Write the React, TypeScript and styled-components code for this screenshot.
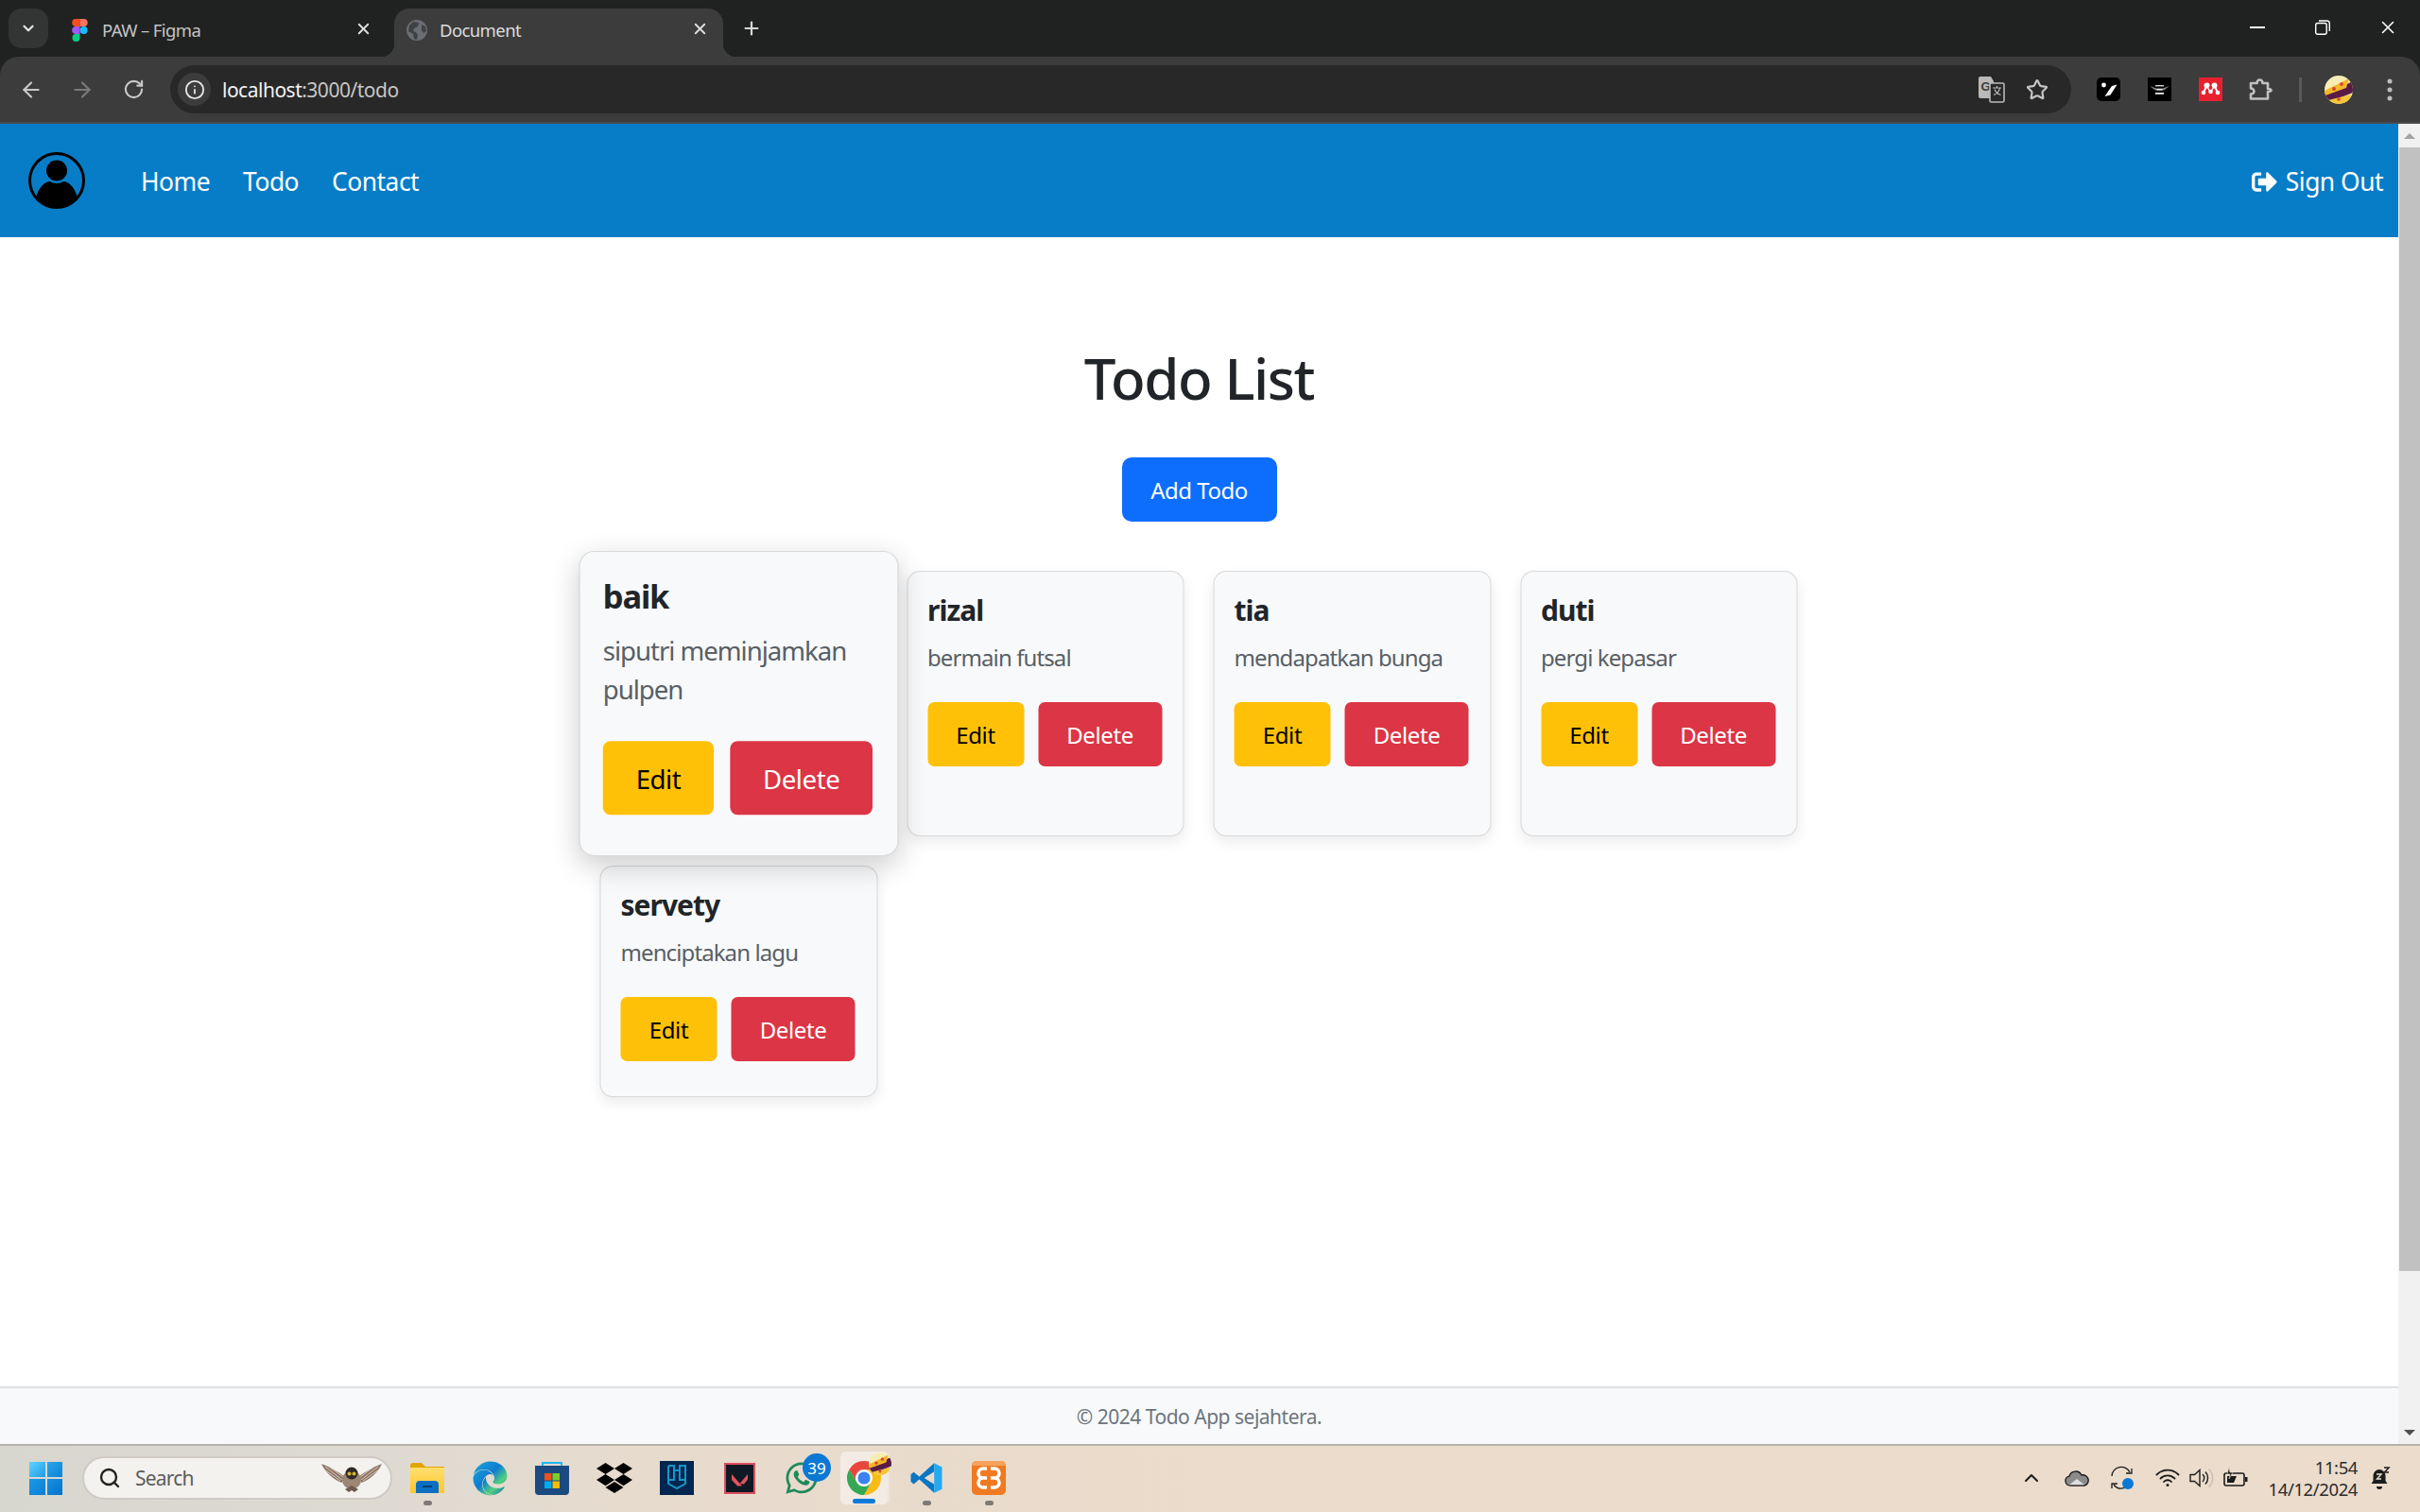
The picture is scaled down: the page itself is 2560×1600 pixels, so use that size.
import React from 'react';
import styled, { createGlobalStyle } from 'styled-components';
import { ArrowLeft, ArrowRight, RotateCw, Info, X, Plus, ChevronDown, ChevronUp, Star, Search as SearchIcon } from 'lucide-react';
import { FaWhatsapp, FaDropbox, FaSignOutAlt, FaEdge } from 'react-icons/fa';

const Global = createGlobalStyle`
  html, body { margin: 0; padding: 0; height: 100%; overflow: hidden; background: #fff; }
  * { box-sizing: border-box; }
  body { font-family: "Noto Sans", "Open Sans", sans-serif; }
`;

const Screen = styled.div`
  width: 2560px; height: 1600px; display: flex; flex-direction: column; overflow: hidden; background: #202222;
`;
const TabStrip = styled.div`
  height: 60px; flex: none; background: #202222; display: flex; align-items: flex-start; padding: 9px 0 0 9px; color: #c7c7c7;
`;
const TabListButton = styled.div`
  width: 42px; height: 42px; border-radius: 14px; background: #333535; color: #e3e3e3; display: flex; align-items: center; justify-content: center;
`;
const Tab = styled.div<{ $active?: boolean }>`
  position: relative; height: 51px; display: flex; align-items: flex-start; font-size: 18.5px; letter-spacing: -0.6px; line-height: 46px;
  width: ${p => (p.$active ? 348 : 357)}px;
  padding-left: 12px;
  margin-left: ${p => (p.$active ? 0 : 9)}px;
  color: ${p => (p.$active ? '#dcdcdc' : '#c4c4c4')};
  background: ${p => (p.$active ? '#3c3c3c' : 'transparent')};
  border-radius: 16px 16px 0 0;
  ${p => p.$active && `
    &::before, &::after { content: ''; position: absolute; bottom: 0; width: 14px; height: 14px; }
    &::before { left: -14px; background: radial-gradient(circle at 0 0, transparent 14px, #3c3c3c 14.5px); }
    &::after { right: -14px; background: radial-gradient(circle at 100% 0, transparent 14px, #3c3c3c 14.5px); }
  `}
`;
const TabFavicon = styled.span`
  width: 24px; height: 46px; display: flex; align-items: center; justify-content: center; flex: none; margin-right: 12px;
`;
const TabTitle = styled.span`flex: 1; white-space: nowrap;`;
const TabClose = styled.span<{ $end: number }>`
  width: 30px; height: 42px; display: flex; align-items: center; justify-content: center; margin-right: ${p => p.$end}px; color: #dedede;
`;
const NewTab = styled.div`
  width: 30px; height: 42px; margin-left: 15px; display: flex; align-items: center; justify-content: center; color: #d8d8d8;
`;
const WindowControls = styled.div`margin-left: auto; display: flex; margin-top: -9px;`;
const WindowButton = styled.div`
  width: 69px; height: 58px; display: flex; align-items: center; justify-content: center; color: #fff;
`;

const Toolbar = styled.div`
  height: 71px; flex: none; background: #3c3c3c; border-bottom: 2px solid #4a4a4a; border-radius: 20px 20px 0 0; display: flex; align-items: center; padding-left: 6px;
`;
const ToolButton = styled.div<{ $dim?: boolean }>`
  width: 54px; height: 48px; flex: none; display: flex; align-items: center; justify-content: center; color: ${p => (p.$dim ? '#7a7a7a' : '#c8c8c8')};
`;
const Omnibox = styled.div`
  flex: 1; height: 51px; margin-left: 12px; background: #282828; border-radius: 26px; display: flex; align-items: center; padding: 0 12px 0 8px;
`;
const InfoChip = styled.div`
  width: 35px; height: 35px; border-radius: 50%; background: #3c3c3c; color: #e6e6e6; display: flex; align-items: center; justify-content: center;
`;
const Url = styled.div`margin-left: 12px; font-size: 21px; letter-spacing: -0.5px; color: #c6c6c6; flex: 1; white-space: nowrap;`;
const UrlHost = styled.span`color: #f2f2f2;`;
const OmniButton = styled.div`
  width: 48px; height: 40px; display: flex; align-items: center; justify-content: center; color: #c4c4c4;
`;
const ToolbarRight = styled.div`display: flex; align-items: center; margin-left: 12px; flex: none; padding-right: 5.5px;`;
const ToolbarDivider = styled.div`width: 3px; height: 26px; background: #5a5a5a; margin: 0 12px 0 12.5px;`;

const Content = styled.div`flex: 1; min-height: 0; display: flex;`;
const PageColumn = styled.div`flex: 1; min-width: 0; display: flex; flex-direction: column;`;
const NavBar = styled.nav`
  height: 120px; flex: none; background: #087dc7; display: flex; align-items: center; padding: 0 16px 0 30px; color: #fff;
`;
const NavLinks = styled.div`display: flex; gap: 35px; margin-left: 59px; padding-top: 2px; font-size: 26.4px; letter-spacing: -0.5px;`;
const NavLink = styled.span``;
const SignOut = styled.div`margin-left: auto; display: flex; align-items: center; gap: 9px; padding-top: 2px; font-size: 26.4px; letter-spacing: -0.5px;`;

const Main = styled.main`flex: 1; min-height: 0; background: #fff; display: flex; flex-direction: column; align-items: center; padding-top: 110.5px;`;
const Heading = styled.h1`
  margin: 0; font-size: 60px; line-height: 77px; font-weight: 500; letter-spacing: -1.4px; color: #212529;
`;
const AddButton = styled.button`
  margin-top: 45.5px; width: 164px; height: 68px; border: 0; border-radius: 10px; background: #0d6efd; color: #fff; font: inherit; font-size: 24px; letter-spacing: -0.5px;
`;
const CardGrid = styled.div`
  margin-top: 52px; display: grid; grid-template-columns: repeat(4, 293.5px); column-gap: 31px; row-gap: 31px; transform: translateX(-0.5px);
`;
const Card = styled.article<{ $featured?: boolean }>`
  display: flex; flex-direction: column; background: #f8f9fa; border: 1.6px solid rgba(0,0,0,.125); border-radius: 14px; padding: 21.5px 21px 37px;
  position: relative;
  box-shadow: ${p => (p.$featured ? '0 8px 26px rgba(0,0,0,.2)' : '0 6px 14px rgba(0,0,0,.08)')};
  ${p => p.$featured && 'transform: scale(1.15); z-index: 2;'}
`;
const CardTitle = styled.h5`margin: 0 0 13.5px; font-size: 30px; line-height: 38px; font-weight: 700; letter-spacing: -1px; color: #212529;`;
const CardText = styled.p`margin: 0 0 29px; font-size: 24px; line-height: 36px; letter-spacing: -0.9px; color: #595f66;`;
const CardActions = styled.div`display: flex; gap: 15px;`;
const ActionButton = styled.button<{ $kind: 'edit' | 'delete' }>`
  height: 68px; border: 0; border-radius: 7px; font: inherit; font-size: 24px; letter-spacing: -0.4px; padding: 0;
  width: ${p => (p.$kind === 'edit' ? 102 : 131)}px;
  background: ${p => (p.$kind === 'edit' ? '#ffc107' : '#dc3545')};
  color: ${p => (p.$kind === 'edit' ? '#000' : '#fff')};
`;
const Footer = styled.footer`
  height: 61px; flex: none; background: #f8f9fa; border-top: 2px solid #dee2e6; display: flex; align-items: center; justify-content: center; color: #6c757d; font-size: 21px; letter-spacing: -0.5px;
`;
const Scrollbar = styled.div`width: 23px; flex: none; background: #f1f1f1; display: flex; flex-direction: column; padding-left: 1px;`;
const ScrollArrow = styled.div<{ $down?: boolean }>`
  height: 25px; flex: none; display: flex; align-items: center; justify-content: center;
  &::before { content: ''; width: 0; height: 0; border-left: 6px solid transparent; border-right: 6px solid transparent;
    ${p => (p.$down ? 'border-top: 6px solid #505050;' : 'border-bottom: 6px solid #a3a3a3;')} }
`;
const ScrollThumb = styled.div`height: 1189px; background: #c1c1c1; flex: none;`;
const ScrollTrack = styled.div`flex: 1;`;

const Taskbar = styled.div`
  height: 72px; flex: none; border-top: 2px solid #b6b1a9; display: flex; align-items: center; padding: 0 16px 2px 31px;
  background: linear-gradient(90deg, #d7d6cf 0%, #dddad2 14%, #e7dbce 26%, #eadbcb 45%, #ebdccc 100%);
`;
const StartLogo = styled.div`
  width: 35px; height: 35px; display: grid; grid-template-columns: 1fr 1fr; gap: 2px; flex: none;
`;
const StartPane = styled.span<{ $from: string; $to: string }>`
  background: linear-gradient(135deg, ${p => p.$from}, ${p => p.$to});
`;
const SearchBox = styled.div`
  width: 328px; height: 46px; margin-left: 21px; margin-right: 4px; flex: none; border-radius: 23px; background: #f3f2ef; border: 2px solid #cfcbc4; display: flex; align-items: center; padding: 0 8px 0 15px; color: #5c5c5c; font-size: 21px; letter-spacing: -0.8px;
`;
const SearchLabel = styled.span`margin-left: 15px; flex: 1;`;
const TaskSlot = styled.div<{ $active?: boolean }>`
  position: relative; width: 66px; height: 56px; flex: none; display: flex; align-items: center; justify-content: center;
  ${p => p.$active && `&::before { content: ''; position: absolute; left: 8px; right: 8px; top: 0; bottom: 0; background: #f4ece4; border-radius: 6px; box-shadow: 2px 0 0 #efe5da; }`}
  & > * { position: relative; }
`;
const RunningDot = styled.span`
  position: absolute !important; bottom: -1px; left: 50%; margin-left: -4px; width: 9px; height: 5px; border-radius: 3px; background: #7d7a76;
`;
const ActiveBar = styled.span`
  position: absolute !important; bottom: 1px; left: 21px; width: 24px; height: 5px; border-radius: 3px; background: #0a7bd8;
`;
const CountBadge = styled.span`
  position: absolute !important; top: 2px; right: 2px; width: 30px; height: 30px; border-radius: 50%; background: #0b78d4; color: #fff; font-size: 17px; display: flex; align-items: center; justify-content: center;
`;
const ChromeOverlay = styled.span`position: absolute !important; top: 1px; right: 4px; display: flex;`;
const Tray = styled.div`margin-left: auto; display: flex; align-items: center; color: #1c1c1c;`;
const TraySlot = styled.div<{ $w: number }>`
  width: ${p => p.$w}px; height: 40px; display: flex; align-items: center; justify-content: center; flex: none;
`;
const TrayGap = styled.div`width: 6px;`;
const Clock = styled.div`
  width: 111px; text-align: right; font-size: 18.5px; line-height: 23px; letter-spacing: -0.4px; color: #2b2b2b;
`;

const FigmaIcon = () => (
  <svg width="17" height="24" viewBox="0 0 17 24">
    <path d="M4.2 0H8.5V8H4.2a4 4 0 0 1 0-8z" fill="#f24e1e" />
    <path d="M8.5 0h4.2a4 4 0 0 1 0 8H8.5z" fill="#ff7262" />
    <path d="M4.2 8H8.5V16H4.2a4 4 0 0 1 0-8z" fill="#a259ff" />
    <circle cx="12.6" cy="12" r="4" fill="#1abcfe" />
    <path d="M4.2 16H8.5v4a4 4 0 1 1-4.3-4z" fill="#0acf83" />
  </svg>
);
const GlobeIcon = () => (
  <svg width="22" height="22" viewBox="0 0 22 22">
    <circle cx="11" cy="11" r="11" fill="#6a6d72" />
    <path d="M7 2l6 1-1 4-4 2-1 3 3 1 2 3-1 5-3-1-1-5-5-3 1-6z" fill="#3f4145" />
    <path d="M16 5l4 2 1 5-3 2-2-3z" fill="#3f4145" />
  </svg>
);
const TranslateIcon = () => (
  <svg width="28" height="28" viewBox="0 0 28 28">
    <path d="M2 0h11l3 5v13l-3 5H2a2 2 0 0 1-2-2V2a2 2 0 0 1 2-2z" fill="#b9b9b9" />
    <text x="2.5" y="14.5" fontSize="13" fontWeight="700" fill="#3c3c3c" fontFamily="Liberation Sans, sans-serif">G</text>
    <rect x="12" y="7" width="15" height="20" rx="1.5" fill="#282828" stroke="#b9b9b9" strokeWidth="1.6" />
    <path d="M15 12h9M19.5 10v2M22.5 12c-.6 3.5-3 6-6.5 7.5M17 13.5c1 2.500 3.500 5 6.500 6" stroke="#b9b9b9" strokeWidth="1.2" fill="none" />
  </svg>
);
const ExtSlash = () => (
  <svg width="25" height="25" viewBox="0 0 25 25">
    <rect width="25" height="25" rx="5" fill="#000" />
    <circle cx="7.500" cy="8" r="2.400" fill="#fff" />
    <path d="M16 9l5.500-1.500-7 11L8.500 20z" fill="#fff" />
  </svg>
);
const ExtWing = () => (
  <svg width="25" height="25" viewBox="0 0 25 25">
    <rect width="25" height="25" fill="#000" />
    <path d="M2 9l7 2.500h7L23 9l-6 4.500H8z" fill="#8a8a8a" />
    <rect x="8" y="8" width="9" height="1.400" fill="#d8d8d8" />
    <rect x="9.500" y="12" width="6" height="1.500" fill="#e8e8e8" />
    <rect x="8" y="16" width="9" height="1.800" fill="#e8e8e8" />
  </svg>
);
const ExtMendeley = () => (
  <svg width="25" height="25" viewBox="0 0 25 25">
    <rect width="25" height="25" fill="#e8202e" />
    <g fill="#fff">
      <circle cx="5" cy="16" r="2.300" /><circle cx="20" cy="16" r="2.300" /><circle cx="12.500" cy="15" r="2.300" />
      <circle cx="8.500" cy="8.500" r="3" /><circle cx="16.500" cy="8.500" r="3" />
    </g>
    <path d="M5 16l3.500-7.500 4 6.500 4-6.500L20 16" stroke="#fff" strokeWidth="2" fill="none" />
    <circle cx="12.500" cy="11" r="2" fill="#e8202e" />
  </svg>
);
const PuzzleIcon = () => (
  <svg width="26" height="26" viewBox="0 0 26 26" fill="none" stroke="#c0c0c0" strokeWidth="2.600" strokeLinejoin="round">
    <path d="M2 6h6.500c0-2 1-3.500 3-3.500s3 1.500 3 3.500H20v6c2 0 3.500.4 3.500 1.500S22 15 20 15v7.500H2v-5c2 0 3.400-1 3.400-2.800S4 11.500 2 11.500z" />
  </svg>
);
const PizzaAvatar = ({ size }: { size: number }) => (
  <svg width={size} height={size} viewBox="0 0 30 30">
    <defs><clipPath id={`pz${size}`}><circle cx="15" cy="15" r="15" /></clipPath></defs>
    <g clipPath={`url(#pz${size})`}>
      <rect width="30" height="30" fill="#f6eeb4" />
      <path d="M0 20L30 6v12L0 30z" fill="#5a1b46" />
      <path d="M0 16L26 3l-3 10L1 21z" fill="#f3b829" />
      <path d="M4 26l24-6-2 10H6z" fill="#f5c53a" />
      <circle cx="10" cy="14" r="2" fill="#d8492a" /><circle cx="18" cy="9" r="2" fill="#d8492a" /><circle cx="15" cy="25" r="1.800" fill="#d8492a" />
    </g>
  </svg>
);
const ProfileAvatar = () => (
  <svg width="60" height="60" viewBox="0 0 60 60">
    <defs><clipPath id="avatarClip"><circle cx="30" cy="30" r="29" /></clipPath></defs>
    <circle cx="30" cy="30" r="28.500" fill="none" stroke="#000" strokeWidth="3" />
    <circle cx="30" cy="19.500" r="11" fill="#000" />
    <g clipPath="url(#avatarClip)"><path d="M8 50C9 39 17 31 23 31c2 1 4 2 7 2s5-1 7-2c6 0 14 8 15 19v10H8z" fill="#000" /></g>
  </svg>
);
const WingsOwl = () => (
  <svg width="66" height="34" viewBox="0 0 66 34">
    <path d="M1 2c8 3 17 8 24 13l-2 7C14 19 5 11 1 2z" fill="#8d7666" />
    <path d="M65 2c-8 3-17 8-24 13l2 7c9-3 18-11 22-20z" fill="#8d7666" />
    <path d="M5 5l18 14M9 5l15 11M4 8l17 12M61 5L43 19M57 5L42 16M62 8L45 20" stroke="#d9cbbd" strokeWidth="1" />
    <ellipse cx="33" cy="19" rx="10" ry="10" fill="#9c8675" />
    <circle cx="33" cy="12" r="6.500" fill="#2f2a27" />
    <circle cx="30.500" cy="12.500" r="2" fill="#d8b62c" /><circle cx="35.500" cy="12.500" r="2" fill="#d8b62c" />
    <path d="M26 29l7-4 7 4-4 3-3-2-3 2z" fill="#6f5b4e" />
  </svg>
);
const FolderIcon = () => (
  <svg width="36" height="32" viewBox="0 0 36 32">
    <path d="M0 3a3 3 0 0 1 3-3h9l4 4h20v6H0z" fill="#e3a500" />
    <path d="M0 5h36v27H0z" fill="url(#folderFill)" />
    <path d="M6 32v-9a4 4 0 0 1 4-4h16a4 4 0 0 1 4 4v9z" fill="#0b6fc2" />
    <rect x="13" y="24" width="10" height="2" fill="#063f76" />
    <defs><linearGradient id="folderFill" x1="0" y1="0" x2="0" y2="1"><stop offset="0" stopColor="#ffdf6e" /><stop offset="1" stopColor="#ffc52e" /></linearGradient></defs>
  </svg>
);
const GradientDefs = () => (
  <svg width="0" height="0" style={{ position: 'absolute' }}>
    <defs>
      <linearGradient id="edgeFill" x1="0" y1="0" x2="1" y2="1">
        <stop offset="0" stopColor="#1aa9d8" /><stop offset=".45" stopColor="#0f7bd0" /><stop offset=".7" stopColor="#52d27e" /><stop offset="1" stopColor="#0b5db3" />
      </linearGradient>
    </defs>
  </svg>
);
const StoreIcon = () => (
  <svg width="36" height="36" viewBox="0 0 36 36">
    <path d="M8 6V2h20v4" fill="none" stroke="#22b7ef" strokeWidth="2" />
    <path d="M0 5h36v27a4 4 0 0 1-4 4H4a4 4 0 0 1-4-4z" fill="#1b4a80" />
    <rect x="10" y="13" width="7.500" height="7.500" fill="#f1511b" /><rect x="18.500" y="13" width="7.500" height="7.500" fill="#80cc28" />
    <rect x="10" y="21.500" width="7.500" height="7.500" fill="#00adef" /><rect x="18.500" y="21.500" width="7.500" height="7.500" fill="#fbbc09" />
  </svg>
);
const ShieldApp = () => (
  <svg width="36" height="36" viewBox="0 0 36 36">
    <rect width="36" height="36" fill="#02264f" />
    <path d="M9 5v19l9 5 9-5V5M9 5h6v15H9M21 20V5h6v15h-6z" fill="none" stroke="#1597c8" strokeWidth="2" />
    <path d="M15 10h6" stroke="#1597c8" strokeWidth="2" />
  </svg>
);
const ValorantApp = () => (
  <svg width="33" height="33" viewBox="0 0 33 33">
    <rect x="1" y="1" width="31" height="31" fill="#0f1923" stroke="#d9505e" strokeWidth="2" />
    <path d="M8 12l11 12.500h-5L8 18zM25 12v5.500l-4 5-4.500-.5z" fill="#e0535f" />
  </svg>
);
const ChromeIcon = () => (
  <svg width="36" height="36" viewBox="2 2 44 44">
    <path d="M24 2A22 22 0 0 0 4.950 13l9.520 16.500A11 11 0 0 1 24 13h19.050A22 22 0 0 0 24 2z" fill="#e8453c" />
    <path d="M43.050 13H24a11 11 0 0 1 9.530 16.500L24 46a22 22 0 0 0 19.050-33z" fill="#f9bc15" />
    <path d="M4.950 13A22 22 0 0 0 24 46l9.530-16.500a11 11 0 0 1-19.060 0z" fill="#34a853" />
    <circle cx="24" cy="24" r="10.500" fill="#fff" /><circle cx="24" cy="24" r="8" fill="#3b82f0" />
  </svg>
);
const VsCodeIcon = () => (
  <svg width="36" height="36" viewBox="0 0 48 48">
    <path d="M35 3L14 22 6 15.500 2 19v10l4 3.500L14 26l21 19V33L21 24l14-9z" fill="#0b76c2" />
    <path d="M35 3l11 5.500v31L35 45z" fill="#25a9f0" />
  </svg>
);
const XamppIcon = () => (
  <svg width="36" height="36" viewBox="0 0 36 36">
    <rect width="36" height="36" rx="5" fill="#ef7a22" />
    <path d="M0 5a5 5 0 0 1 5-5h26a5 5 0 0 1 5 5z" fill="#f7a25c" />
    <g fill="none" stroke="#fff" strokeWidth="3.600">
      <path d="M16 8h-4a4.500 4.500 0 0 0 0 10h4M16 18h-4a5 5 0 0 0 0 10h4" />
      <path d="M20 8h4a4.500 4.500 0 0 1 0 10h-4M20 18h4a5 5 0 0 1 0 10h-4" />
    </g>
  </svg>
);
const CloudIcon = () => (
  <svg width="26" height="18" viewBox="0 0 26 18">
    <path d="M6 17a5 5 0 0 1-1-9.900A7 7 0 0 1 18 6a5.500 5.500 0 0 1 3 11z" fill="#8b8b8b" stroke="#1c1c1c" strokeWidth="1.400" />
    <path d="M5 16.300L13 10l8 6.300z" fill="#dedede" />
  </svg>
);
const SyncIcon = () => (
  <svg width="26" height="26" viewBox="0 0 26 26" fill="none" stroke="#1c1c1c" strokeWidth="1.300">
    <path d="M2 11A10 10 0 0 1 21 7" /><path d="M23 3v5h-6" />
    <path d="M22 15A10 10 0 0 1 4 20" /><path d="M2 24v-5h6" />
    <circle cx="19" cy="19" r="6" fill="#0b78d4" stroke="none" />
  </svg>
);
const WifiIcon = () => (
  <svg width="26" height="20" viewBox="0 0 26 20" fill="none" stroke="#1c1c1c" strokeWidth="1.800" strokeLinecap="round">
    <path d="M1.500 6.500a16 16 0 0 1 23 0" /><path d="M5.500 10.500a10.500 10.500 0 0 1 15 0" /><path d="M9 14a5.500 5.500 0 0 1 8 0" />
    <circle cx="13" cy="17.500" r="1.500" fill="#1c1c1c" stroke="none" />
  </svg>
);
const SpeakerIcon = () => (
  <svg width="26" height="22" viewBox="0 0 26 22" fill="none" stroke="#1c1c1c" strokeWidth="1.400">
    <path d="M1 7.500h4.500L11 2.500v17l-5.500-5H1z" /><path d="M14 7a5.500 5.500 0 0 1 0 8" /><path d="M17 4.500a9.500 9.500 0 0 1 0 13" />
    <path d="M20.500 1.500a13 13 0 0 1 0 19" stroke="#c9bdb0" />
  </svg>
);
const BatteryIcon = () => (
  <svg width="26" height="22" viewBox="0 0 26 22">
    <rect x="1" y="6" width="21" height="13" rx="2" fill="none" stroke="#1c1c1c" strokeWidth="1.600" />
    <rect x="23" y="10" width="2.500" height="5" fill="#1c1c1c" />
    <path d="M4 16V9h10l-3 7z" fill="#1c1c1c" />
    <path d="M6 0l-2 7h3l-1 5 4-7H7z" fill="#1c1c1c" stroke="#eadbcb" strokeWidth=".6" />
  </svg>
);
const BellZzIcon = () => (
  <svg width="24" height="24" viewBox="0 0 24 24">
    <path d="M10 3a6.500 6.500 0 0 1 6.500 6.500V15l2 3H1.500l2-3V9.500A6.500 6.500 0 0 1 10 3z" fill="#1c1c1c" />
    <path d="M7 21h6a3 3 0 0 1-6 0z" fill="#1c1c1c" />
    <path d="M7 8h5l-4.500 5H12" stroke="#eadbcb" strokeWidth="1.400" fill="none" />
    <path d="M15 1h5l-4.500 5H20" stroke="#1c1c1c" strokeWidth="1.500" fill="#eadbcb" />
  </svg>
);
const RestoreIcon = () => (
  <svg width="16" height="16" viewBox="0 0 16 16" fill="none" stroke="#fff" strokeWidth="1.400">
    <rect x=".7" y="3.500" width="11.500" height="11.800" rx="2" /><path d="M4 1h8.500A2.800 2.800 0 0 1 15.300 3.800V12" />
  </svg>
);
const MenuDots = () => (
  <svg width="6" height="24" viewBox="0 0 6 24" fill="#bdbdbd"><circle cx="3" cy="3" r="2.500" /><circle cx="3" cy="12" r="2.500" /><circle cx="3" cy="21" r="2.500" /></svg>
);
const MinimizeGlyph = () => <svg width="16" height="2" viewBox="0 0 16 2"><rect width="16" height="2" fill="#fff" /></svg>;

type Todo = { title: string; text: string; featured?: boolean };
const todos: Todo[] = [
  { title: 'baik', text: 'siputri meminjamkan pulpen', featured: true },
  { title: 'rizal', text: 'bermain futsal' },
  { title: 'tia', text: 'mendapatkan bunga' },
  { title: 'duti', text: 'pergi kepasar' },
  { title: 'servety', text: 'menciptakan lagu' },
];

export default function App() {
  return (
    <Screen>
      <Global />
      <GradientDefs />
      <TabStrip>
        <TabListButton><ChevronDown size={18} strokeWidth={3} /></TabListButton>
        <Tab>
          <TabFavicon><FigmaIcon /></TabFavicon>
          <TabTitle>PAW – Figma</TabTitle>
          <TabClose $end={18}><X size={19} strokeWidth={2.400} /></TabClose>
        </Tab>
        <Tab $active>
          <TabFavicon><GlobeIcon /></TabFavicon>
          <TabTitle>Document</TabTitle>
          <TabClose $end={10}><X size={19} strokeWidth={2.400} /></TabClose>
        </Tab>
        <NewTab><Plus size={22} strokeWidth={2.400} /></NewTab>
        <WindowControls>
          <WindowButton><MinimizeGlyph /></WindowButton>
          <WindowButton><RestoreIcon /></WindowButton>
          <WindowButton><X size={22} strokeWidth={1.700} /></WindowButton>
        </WindowControls>
      </TabStrip>
      <Toolbar>
        <ToolButton><ArrowLeft size={26} strokeWidth={2} /></ToolButton>
        <ToolButton $dim><ArrowRight size={26} strokeWidth={2} /></ToolButton>
        <ToolButton><RotateCw size={23} strokeWidth={2.200} /></ToolButton>
        <Omnibox>
          <InfoChip><Info size={22} strokeWidth={2} /></InfoChip>
          <Url><UrlHost>localhost</UrlHost>:3000/todo</Url>
          <OmniButton><TranslateIcon /></OmniButton>
          <OmniButton><Star size={24} strokeWidth={2.200} /></OmniButton>
        </Omnibox>
        <ToolbarRight>
          <ToolButton><ExtSlash /></ToolButton>
          <ToolButton><ExtWing /></ToolButton>
          <ToolButton><ExtMendeley /></ToolButton>
          <ToolButton><PuzzleIcon /></ToolButton>
          <ToolbarDivider />
          <ToolButton><PizzaAvatar size={30} /></ToolButton>
          <ToolButton><MenuDots /></ToolButton>
        </ToolbarRight>
      </Toolbar>
      <Content>
        <PageColumn>
          <NavBar>
            <ProfileAvatar />
            <NavLinks>
              <NavLink>Home</NavLink>
              <NavLink>Todo</NavLink>
              <NavLink>Contact</NavLink>
            </NavLinks>
            <SignOut><FaSignOutAlt size={27} />Sign Out</SignOut>
          </NavBar>
          <Main>
            <Heading>Todo List</Heading>
            <AddButton>Add Todo</AddButton>
            <CardGrid>
              {todos.map(t => (
                <Card key={t.title} $featured={t.featured}>
                  <CardTitle>{t.title}</CardTitle>
                  <CardText>{t.text}</CardText>
                  <CardActions>
                    <ActionButton $kind="edit">Edit</ActionButton>
                    <ActionButton $kind="delete">Delete</ActionButton>
                  </CardActions>
                </Card>
              ))}
            </CardGrid>
          </Main>
          <Footer>© 2024 Todo App sejahtera.</Footer>
        </PageColumn>
        <Scrollbar>
          <ScrollArrow />
          <ScrollThumb />
          <ScrollTrack />
          <ScrollArrow $down />
        </Scrollbar>
      </Content>
      <Taskbar>
        <StartLogo>
          <StartPane $from="#5fd3ff" $to="#1f9be6" />
          <StartPane $from="#2ba5ea" $to="#0a84d8" />
          <StartPane $from="#1c97e4" $to="#0a7fd6" />
          <StartPane $from="#1590e0" $to="#0673cc" />
        </StartLogo>
        <SearchBox>
          <SearchIcon size={24} strokeWidth={2.400} color="#222" />
          <SearchLabel>Search</SearchLabel>
          <WingsOwl />
        </SearchBox>
        <TaskSlot><FolderIcon /><RunningDot /></TaskSlot>
        <TaskSlot><FaEdge size={37} fill="url(#edgeFill)" /></TaskSlot>
        <TaskSlot><StoreIcon /></TaskSlot>
        <TaskSlot><FaDropbox size={38} color="#000" /></TaskSlot>
        <TaskSlot><ShieldApp /></TaskSlot>
        <TaskSlot><ValorantApp /></TaskSlot>
        <TaskSlot><FaWhatsapp size={38} color="#1f8a5b" /><CountBadge>39</CountBadge></TaskSlot>
        <TaskSlot $active>
          <ChromeIcon />
          <ChromeOverlay><PizzaAvatar size={24} /></ChromeOverlay>
          <ActiveBar />
        </TaskSlot>
        <TaskSlot><VsCodeIcon /><RunningDot /></TaskSlot>
        <TaskSlot><XamppIcon /><RunningDot /></TaskSlot>
        <Tray>
          <TraySlot $w={48}><ChevronUp size={24} strokeWidth={2} /></TraySlot>
          <TraySlot $w={48}><CloudIcon /></TraySlot>
          <TraySlot $w={48}><SyncIcon /></TraySlot>
          <TrayGap />
          <TraySlot $w={36}><WifiIcon /></TraySlot>
          <TraySlot $w={36}><SpeakerIcon /></TraySlot>
          <TraySlot $w={36}><BatteryIcon /></TraySlot>
          <Clock>11:54<br />14/12/2024</Clock>
          <TraySlot $w={50}><BellZzIcon /></TraySlot>
        </Tray>
      </Taskbar>
    </Screen>
  );
}
